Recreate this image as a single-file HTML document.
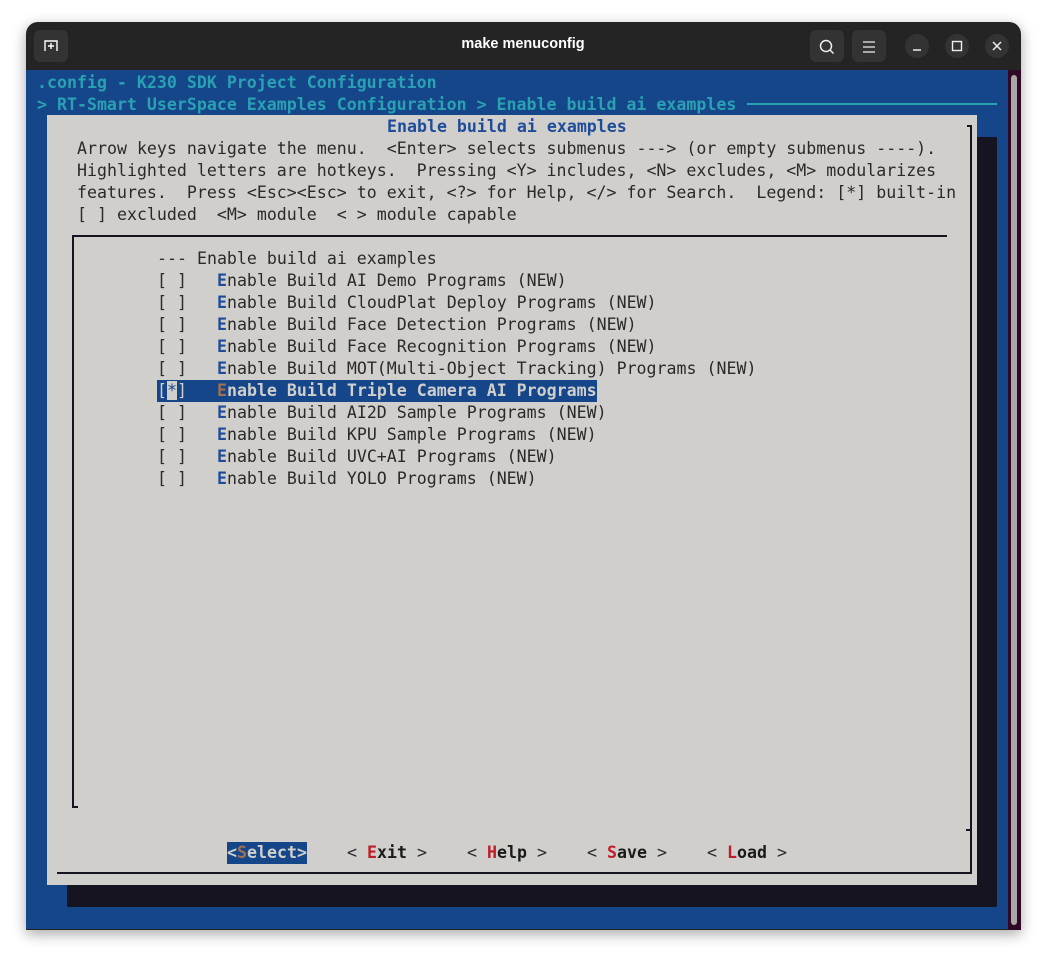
<!DOCTYPE html>
<html><head><meta charset="utf-8"><style>
*{margin:0;padding:0;box-sizing:border-box}
body{width:1046px;height:959px;background:#fff;position:relative;overflow:hidden;font-family:"DejaVu Sans Mono","Liberation Mono",monospace}
.win{position:absolute;left:26px;top:22px;width:995px;height:908px;border-radius:12px 12px 0 0;background:#242424;box-shadow:0 4px 14px rgba(0,0,0,.35);overflow:hidden}
.term{position:absolute;left:26px;top:70px;width:982px;height:859px;background:#15468a}
.sb{position:absolute;left:1008px;top:70px;width:13px;height:860px;background:#300a24}
.thumb{position:absolute;left:1011px;top:75px;width:6px;height:850px;background:#a8a8a8;border-radius:3px}
.t{position:absolute;white-space:pre;font-size:16.6px;line-height:22px;height:22px;color:#2a2a2a;margin-top:1px}
.c{color:#2aa1b3;font-weight:bold}
.b{color:#1e4c9a;font-weight:bold}
.r{color:#c01c28;font-weight:bold}
.k{color:#1a1a1a;font-weight:bold}
.hl{background:#15468a;color:#d0cfcc;font-weight:bold}
.br{color:#a07050}
.ln{position:absolute;background:#171421}
.btn{position:absolute;top:30px;width:34px;height:32px;border-radius:6px;background:#333}
.cb{position:absolute;top:34px;width:24px;height:24px;border-radius:12px;background:#333}
</style></head><body>
<div class="win"></div>
<div class="btn" style="left:34px"></div>
<svg style="position:absolute;left:41px;top:36px" width="20" height="20"><path d="M4 15V5h12v10M10 7v6M7 10h6" stroke="#fff" stroke-width="1.4" fill="none"/></svg>
<div style="position:absolute;left:0;width:1046px;top:36px;text-align:center;color:#fff;font:bold 14.5px 'Liberation Sans',sans-serif">make menuconfig</div>
<div class="btn" style="left:810px"></div>
<svg style="position:absolute;left:817px;top:37px" width="20" height="20"><circle cx="9" cy="9" r="5.5" stroke="#eee" stroke-width="1.5" fill="none"/><path d="M13 13l3.5 3.5" stroke="#eee" stroke-width="1.5"/></svg>
<div class="btn" style="left:852px"></div>
<svg style="position:absolute;left:859px;top:37px" width="20" height="20"><path d="M4 5h12M4 10h12M4 15h12" stroke="#eee" stroke-width="1.3"/></svg>
<div class="cb" style="left:905px"></div><div class="cb" style="left:945px"></div><div class="cb" style="left:985px"></div>
<svg style="position:absolute;left:905px;top:34px" width="104" height="24"><path d="M8 16h8" stroke="#eee" stroke-width="1.5"/><rect x="47.5" y="7.5" width="9" height="9" stroke="#eee" stroke-width="1.4" fill="none"/><path d="M88 8l8 8M96 8l-8 8" stroke="#eee" stroke-width="1.5"/></svg>
<div class="term"></div>
<div class="sb"></div><div class="thumb"></div>
<div class="t c" style="left:37px;top:71px">.config - K230 SDK Project Configuration</div>
<div class="t c" style="left:37px;top:93px">&gt; RT-Smart UserSpace Examples Configuration &gt; Enable build ai examples</div>
<div class="ln" style="left:747px;top:103px;width:250px;height:2px;background:#2aa1b3"></div>
<div class="ln" style="left:67px;top:137px;width:930px;height:770px"></div>
<div style="position:absolute;left:47px;top:115px;width:930px;height:770px;background:#d0cfcc"></div>
<div class="t" style="left:387px;top:115px;color:#1e4c9a;font-weight:bold">Enable build ai examples</div>
<div class="ln" style="left:967px;top:125px;width:5px;height:2px"></div>
<div class="ln" style="left:970px;top:125px;width:2px;height:749px"></div>
<div class="ln" style="left:966px;top:829px;width:5px;height:2px"></div>
<div class="ln" style="left:57px;top:872px;width:915px;height:2px"></div>
<div class="ln" style="left:72px;top:235px;width:875px;height:2px"></div>
<div class="ln" style="left:72px;top:235px;width:2px;height:573px"></div>
<div class="ln" style="left:72px;top:806px;width:6px;height:2px"></div>
<div class="t" style="left:77px;top:137px">Arrow keys navigate the menu.  &lt;Enter&gt; selects submenus ---&gt; (or empty submenus ----).</div>
<div class="t" style="left:77px;top:159px">Highlighted letters are hotkeys.  Pressing &lt;Y&gt; includes, &lt;N&gt; excludes, &lt;M&gt; modularizes</div>
<div class="t" style="left:77px;top:181px">features.  Press &lt;Esc&gt;&lt;Esc&gt; to exit, &lt;?&gt; for Help, &lt;/&gt; for Search.  Legend: [*] built-in</div>
<div class="t" style="left:77px;top:203px">[ ] excluded  &lt;M&gt; module  &lt; &gt; module capable</div>
<div class="t" style="left:157px;top:247px">--- Enable build ai examples</div>
<div class="t" style="left:157px;top:269px">[ ]   <span class="b">E</span>nable Build AI Demo Programs (NEW)</div>
<div class="t" style="left:157px;top:291px">[ ]   <span class="b">E</span>nable Build CloudPlat Deploy Programs (NEW)</div>
<div class="t" style="left:157px;top:313px">[ ]   <span class="b">E</span>nable Build Face Detection Programs (NEW)</div>
<div class="t" style="left:157px;top:335px">[ ]   <span class="b">E</span>nable Build Face Recognition Programs (NEW)</div>
<div class="t" style="left:157px;top:357px">[ ]   <span class="b">E</span>nable Build MOT(Multi-Object Tracking) Programs (NEW)</div>
<div class="t hl" style="left:157px;top:379px;font-weight:normal">[<span style="background:#d0cfcc;color:#15468a;outline:1px solid #15468a">*</span>]   <span class="br" style="font-weight:bold">E</span><b>nable Build Triple Camera AI Programs</b></div>
<div class="t" style="left:157px;top:401px">[ ]   <span class="b">E</span>nable Build AI2D Sample Programs (NEW)</div>
<div class="t" style="left:157px;top:423px">[ ]   <span class="b">E</span>nable Build KPU Sample Programs (NEW)</div>
<div class="t" style="left:157px;top:445px">[ ]   <span class="b">E</span>nable Build UVC+AI Programs (NEW)</div>
<div class="t" style="left:157px;top:467px">[ ]   <span class="b">E</span>nable Build YOLO Programs (NEW)</div>
<div class="t hl" style="left:227px;top:841px">&lt;<span class="br">S</span>elect&gt;</div>
<div class="t" style="left:347px;top:841px">&lt; <span class="r">E</span><span class="k">xit</span> &gt;</div>
<div class="t" style="left:467px;top:841px">&lt; <span class="r">H</span><span class="k">elp</span> &gt;</div>
<div class="t" style="left:587px;top:841px">&lt; <span class="r">S</span><span class="k">ave</span> &gt;</div>
<div class="t" style="left:707px;top:841px">&lt; <span class="r">L</span><span class="k">oad</span> &gt;</div>
</body></html>
